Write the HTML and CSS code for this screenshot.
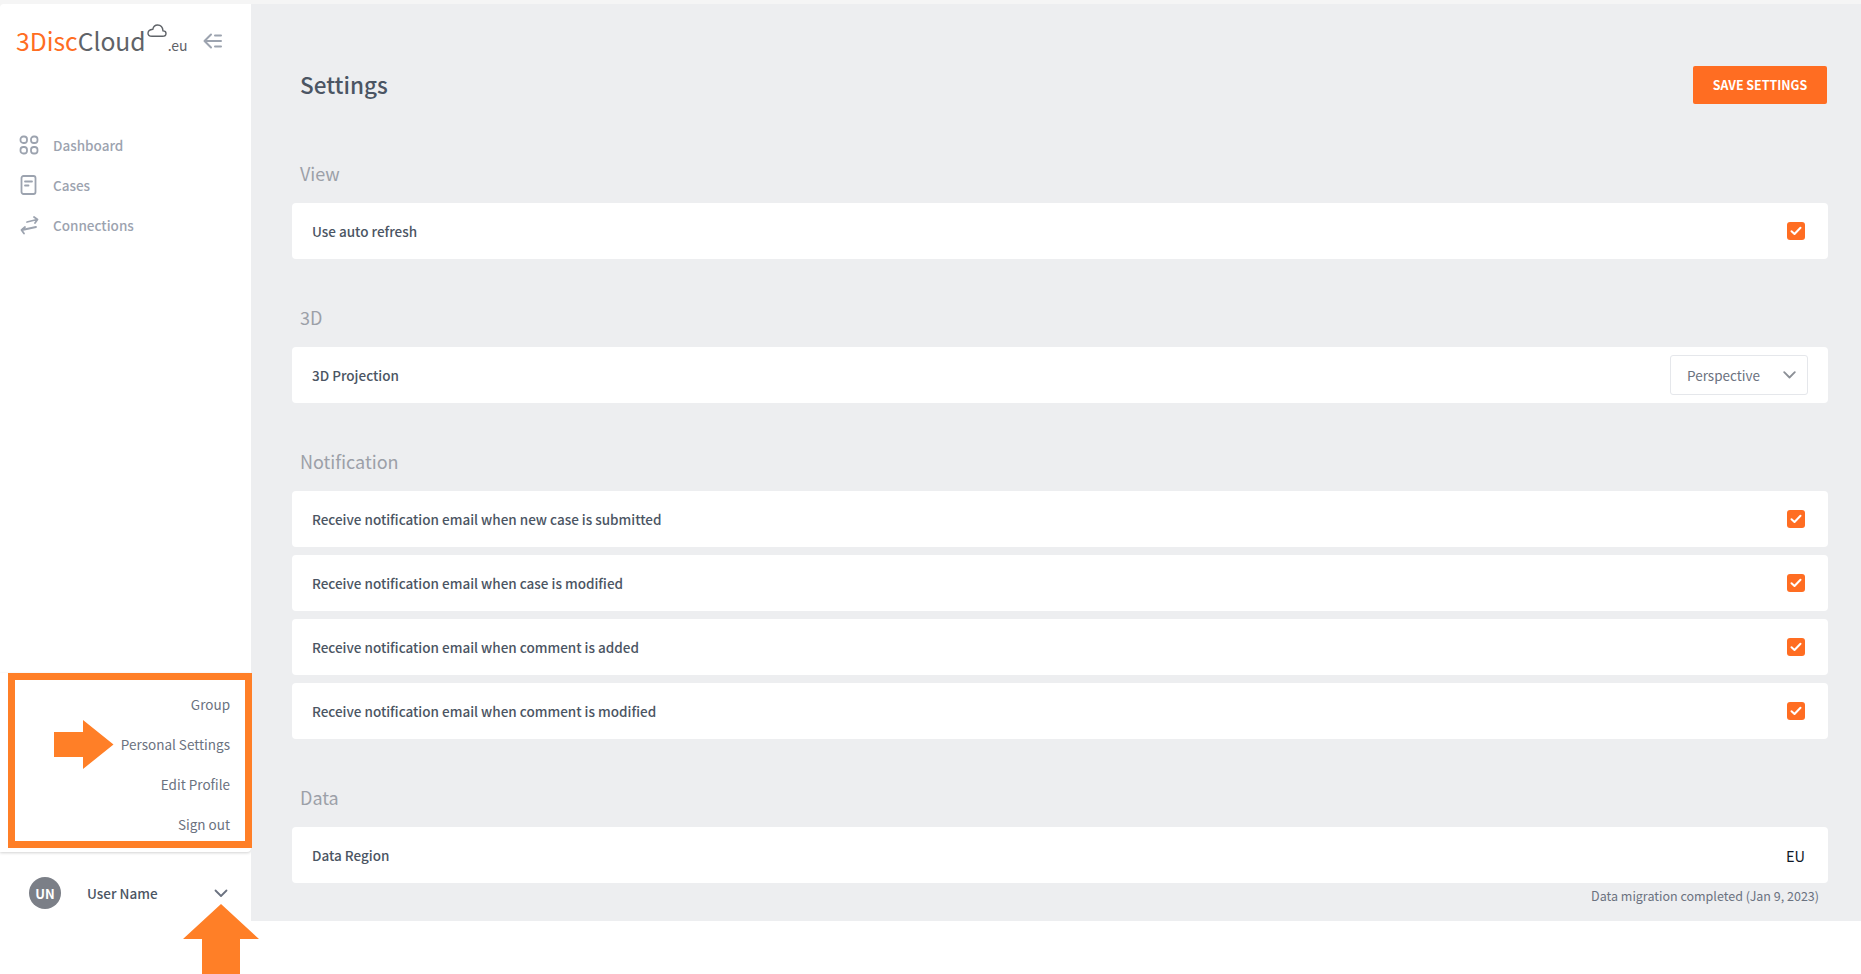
FILE: index.html
```html
<!DOCTYPE html>
<html lang="en">
<head>
<meta charset="utf-8">
<title>Settings</title>
<link rel="stylesheet" href="styles.css">
</head>
<body>
<div class="app">
  <aside class="sidebar">
    <div class="brand">
      <div class="logo"><span class="logo-a">3Disc</span><span class="logo-b">Cloud</span>
        <svg class="logo-cloud" width="20" height="14" viewBox="0 0 20 14" fill="none" stroke="#5f6368" stroke-width="1.4"><path d="M5 12.3H15.5C18 12.3 19 11 19 9.5 19 8 17.8 6.9 16 6.9 15.7 3.2 13.3 1 10.6 1 8 1 6.3 2.8 5.8 5.3 3.5 5.6 1 6.8 1 9.3 1 11 2.6 12.3 5 12.3Z"/></svg>
        <span class="logo-eu">.eu</span></div>
      <svg class="collapse" width="20" height="16" viewBox="0 0 20 16" fill="none" stroke="#9ca3af" stroke-width="2" stroke-linecap="round" stroke-linejoin="round"><path d="M8 1.5 1.5 8 8 14.5M1.5 8H18M12 2.5h6M12 13.5h6"/></svg>
    </div>
    <nav class="nav">
      <a class="nav-item"><svg width="20" height="20" viewBox="0 0 20 20" fill="none" stroke="#9ca3af" stroke-width="1.8"><rect x="1.5" y="1.5" width="6.5" height="6.5" rx="2.8"/><rect x="12" y="1.5" width="6.5" height="6.5" rx="2.8"/><rect x="1.5" y="12" width="6.5" height="6.5" rx="2.8"/><rect x="12" y="12" width="6.5" height="6.5" rx="2.8"/></svg><span>Dashboard</span></a>
      <a class="nav-item"><svg width="20" height="20" viewBox="0 0 20 20" fill="none" stroke="#9ca3af" stroke-width="1.8" stroke-linecap="round"><rect x="2.5" y="1" width="14" height="18" rx="2"/><path d="M6 6.5h7M6 10.5h3.5"/></svg><span>Cases</span></a>
      <a class="nav-item"><svg width="20" height="20" viewBox="0 0 20 20" fill="none" stroke="#9ca3af" stroke-width="1.8" stroke-linecap="round" stroke-linejoin="round"><path d="M8 7 18 4.500M15 2 18.500 4.500 16 8M17 12 3 15M6 12 2.500 15 5 18.500"/></svg><span>Connections</span></a>
    </nav>
    <div class="user-block">
      <div class="user-menu">
        <a>Group</a>
        <a>Personal Settings</a>
        <a>Edit Profile</a>
        <a>Sign out</a>
      </div>
      <div class="user-row">
        <span class="avatar">UN</span>
        <span class="user-name">User Name</span>
        <svg width="14" height="9" viewBox="0 0 14 9" fill="none" stroke="#6b7280" stroke-width="1.8" stroke-linecap="round" stroke-linejoin="round"><path d="M1.500 1.500 7 7 12.500 1.500"/></svg>
      </div>
    </div>
  </aside>
  <div class="content">
    <main class="main">
      <header class="page-head">
        <h1>Settings</h1>
        <button class="save">SAVE SETTINGS</button>
      </header>
      <section class="group">
        <h2>View</h2>
        <div class="card"><span>Use auto refresh</span><span class="check"><svg width="12" height="10" viewBox="0 0 12 10" fill="none" stroke="#fff" stroke-width="2" stroke-linecap="round" stroke-linejoin="round"><path d="M1.500 5.200 4.500 8 10.500 1.700"/></svg></span></div>
      </section>
      <section class="group">
        <h2>3D</h2>
        <div class="card card-select"><span>3D Projection</span>
          <div class="select"><span>Perspective</span><svg width="13" height="8" viewBox="0 0 13 8" fill="none" stroke="#8b8f96" stroke-width="1.8" stroke-linecap="round" stroke-linejoin="round"><path d="M1.200 1.200 6.500 6.500 11.800 1.200"/></svg></div>
        </div>
      </section>
      <section class="group">
        <h2>Notification</h2>
        <div class="card"><span>Receive notification email when new case is submitted</span><span class="check"><svg width="12" height="10" viewBox="0 0 12 10" fill="none" stroke="#fff" stroke-width="2" stroke-linecap="round" stroke-linejoin="round"><path d="M1.500 5.200 4.500 8 10.500 1.700"/></svg></span></div>
        <div class="card"><span>Receive notification email when case is modified</span><span class="check"><svg width="12" height="10" viewBox="0 0 12 10" fill="none" stroke="#fff" stroke-width="2" stroke-linecap="round" stroke-linejoin="round"><path d="M1.500 5.200 4.500 8 10.500 1.700"/></svg></span></div>
        <div class="card"><span>Receive notification email when comment is added</span><span class="check"><svg width="12" height="10" viewBox="0 0 12 10" fill="none" stroke="#fff" stroke-width="2" stroke-linecap="round" stroke-linejoin="round"><path d="M1.500 5.200 4.500 8 10.500 1.700"/></svg></span></div>
        <div class="card"><span>Receive notification email when comment is modified</span><span class="check"><svg width="12" height="10" viewBox="0 0 12 10" fill="none" stroke="#fff" stroke-width="2" stroke-linecap="round" stroke-linejoin="round"><path d="M1.500 5.200 4.500 8 10.500 1.700"/></svg></span></div>
      </section>
      <section class="group group-last">
        <h2>Data</h2>
        <div class="card"><span>Data Region</span><span class="region">EU</span></div>
        <p class="note">Data migration completed (Jan 9, 2023)</p>
      </section>
    </main>
  </div>
</div>
<div class="callout-box"></div>
<svg class="callout-arrow-right" width="60" height="49" viewBox="0 0 60 49"><path fill="#ff7f27" d="M0 12H29V0L59.500 24.500 29 49V37H0Z"/></svg>
<svg class="callout-arrow-up" width="76" height="70" viewBox="0 0 76 70"><path fill="#ff7f27" d="M38 0 76 35H57V70H19V35H0Z"/></svg>
</body>
</html>
```
FILE: styles.css
```css
* { box-sizing: border-box; }
html, body { margin: 0; height: 100%; }
body {
  background: #fff;
  font-family: "Noto Sans CJK SC", "Noto Sans", sans-serif;
  color: #4b5563;
  overflow: hidden;
  position: relative;
}
.app {
  display: flex;
  height: 100%;
  padding-top: 4px;
  background: #f5f5f5;
}
.sidebar {
  width: 251px;
  flex: none;
  background: #fff;
  border-top-left-radius: 4px;
  display: flex;
  flex-direction: column;
}
.brand {
  display: flex;
  align-items: center;
  height: 74px;
  padding-left: 16px;
  flex: none;
}
.logo {
  display: flex;
  align-items: baseline;
  font-family: "Noto Sans CJK SC", sans-serif;
  font-weight: 400;
  font-size: 24.7px;
  line-height: 32px;
  width: 187px;
  padding-top: 2px;
}
.logo-a { color: #ff6d22; }
.logo-b { color: #5f6368; }
.logo-cloud { align-self: flex-start; margin: 0 0 0 1px; }
.logo-eu { font-size: 14px; color: #5f6368; font-weight: 400; margin-left: 1px; }
.collapse { flex: none; }
.nav {
  margin-top: 47px;
  display: flex;
  flex-direction: column;
  flex: 1;
}
.nav-item {
  display: flex;
  align-items: center;
  height: 40px;
  padding-left: 19px;
  gap: 14px;
  font-size: 13.5px;
  font-weight: 500;
  color: #9ca3af;
}
.user-block { flex: none; }
.user-menu {
  display: flex;
  flex-direction: column;
  align-items: flex-end;
  padding: 11px 21px 8px 0;
  border-radius: 0 0 4px 0;
  box-shadow: 0 1px 3px rgba(0, 0, 0, .18);
  font-size: 13.5px;
  color: #6b7280;
}
.user-menu a { height: 40px; line-height: 40px; }
.user-row {
  height: 122px;
  display: flex;
  align-items: flex-start;
  padding: 25px 0 0 29px;
}
.avatar {
  width: 32px;
  height: 32px;
  border-radius: 50%;
  background: #7b7f87;
  color: #fff;
  font-size: 13px;
  font-weight: 700;
  display: flex;
  align-items: center;
  justify-content: center;
  flex: none;
}
.user-name {
  width: 127px;
  margin-left: 26px;
  font-size: 13.5px;
  font-weight: 500;
  line-height: 32px;
}
.user-row svg { margin-top: 12px; }
.content {
  flex: 1;
  min-width: 0;
  background: #fff;
}
.main {
  height: 917px;
  background: #edeef0;
  padding: 62px 33px 0 41px;
}
.page-head {
  display: flex;
  justify-content: space-between;
  align-items: center;
  height: 38px;
  margin-bottom: 56px;
  padding-left: 8px;
}
h1 {
  margin: 0 0 2px;
  font-size: 22.5px;
  font-weight: 500;
  color: #4b5563;
  line-height: 36px;
}
.save {
  width: 134px;
  height: 38px;
  border: 0;
  border-radius: 2px;
  background: #ff6d22;
  color: #fff;
  font: 700 12.4px "Noto Sans CJK SC", sans-serif;
  padding: 0;
  margin-right: 1px;
}
.group { margin-bottom: 45px; display: flex; flex-direction: column; gap: 8px; }
.group-last { gap: 0; margin: 0; }
h2 {
  margin: 0 0 9px 8px;
  font-size: 18px;
  font-weight: 400;
  line-height: 26px;
  color: #9ca0a8;
}
.group-last h2 { margin-bottom: 17px; }
.card {
  height: 56px;
  background: #fff;
  border-radius: 4px;
  display: flex;
  align-items: center;
  justify-content: space-between;
  padding: 0 23px 0 20px;
  font-size: 13.5px;
  font-weight: 500;
  color: #4b5563;
}
.card-select { padding-right: 20px; }
.check {
  width: 18px;
  height: 18px;
  border-radius: 3px;
  background: #ff6d22;
  display: flex;
  align-items: center;
  justify-content: center;
}
.select {
  width: 138px;
  height: 40px;
  border: 1px solid #e5e7eb;
  border-radius: 3px;
  display: flex;
  align-items: center;
  justify-content: space-between;
  padding: 0 11px 0 16px;
  font-weight: 400;
  color: #6b7280;
}
.region { font-weight: 400; color: #111827; font-size: 14.5px; }
.note {
  margin: 3px 9px 0 0;
  text-align: right;
  font-size: 12.5px;
  line-height: 20px;
  color: #6b7280;
}
.callout-box {
  position: absolute;
  left: 8px;
  top: 673px;
  width: 244px;
  height: 175px;
  border: 7px solid #ff7f27;
}
.callout-arrow-right { position: absolute; left: 54px; top: 720px; }
.callout-arrow-up { position: absolute; left: 183px; top: 904px; }
```
